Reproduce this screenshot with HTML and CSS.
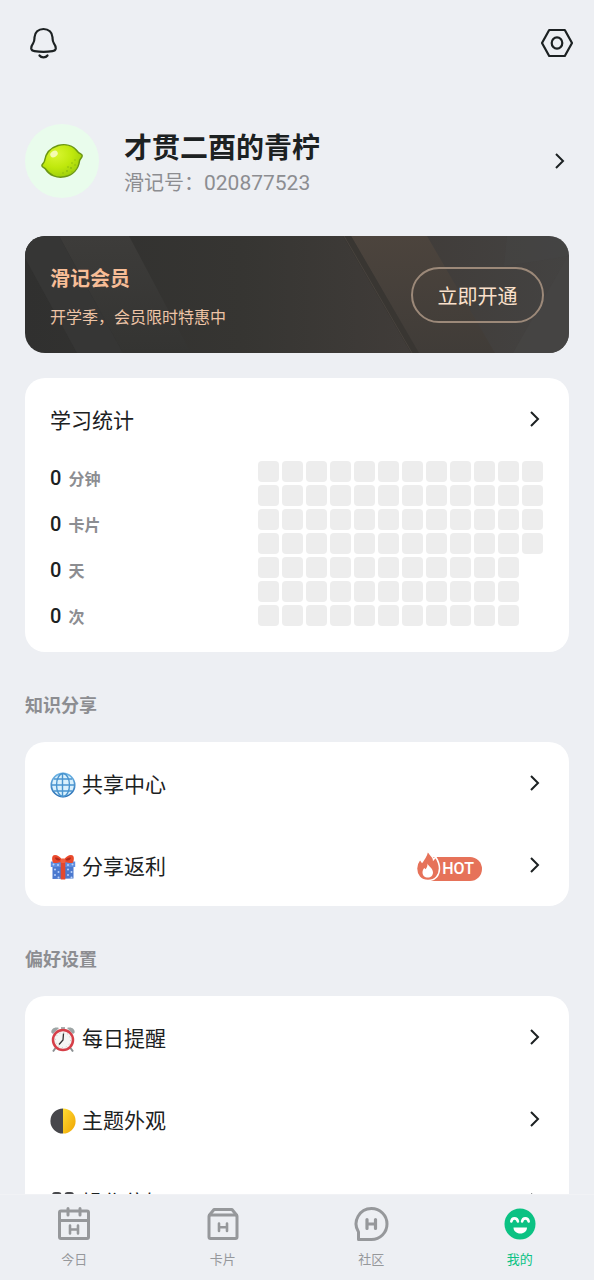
FILE: index.html
```html
<!DOCTYPE html>
<html lang="zh-CN">
<head>
<meta charset="utf-8">
<meta name="viewport" content="width=device-width, initial-scale=1">
<title>我的</title>
<link rel="stylesheet" href="styles.css">
</head>
<body>
<svg class="defs" aria-hidden="true">
  <symbol id="chevron" viewBox="0 0 12 18"><path d="M2 2l7 7-7 7" fill="none" stroke="currentColor" stroke-width="2"/></symbol>
</svg>
<div class="app">
  <main class="content">
    <header class="topbar">
      <button class="icon-btn" type="button" aria-label="通知">
        <svg width="36" height="36" viewBox="0 0 36 36" fill="none" stroke="#1c2122" stroke-width="2.200" stroke-linecap="round" stroke-linejoin="round"><path d="M18.500 4c-5.200 0-8.800 3.400-9 8.300-.1 2.600.1 4-1.400 6-1.500 2.100-2.200 3.500-1.900 5.200.3 1.500 1.500 2.400 3.300 2.700 5.500.8 12.500.8 18 0 1.800-.3 3-1.200 3.300-2.700.3-1.700-.4-3.100-1.900-5.200-1.500-2-1.300-3.400-1.400-6C27.300 7.400 23.700 4 18.500 4z"/><path d="M14.500 30.500c1.800 2.600 6.200 2.600 8 0"/></svg>
      </button>
      <button class="icon-btn" type="button" aria-label="设置">
        <svg width="36" height="36" viewBox="0 0 36 36" fill="none" stroke="#1c2122" stroke-width="2.200" stroke-linejoin="round"><path d="M10.200 5h15.600L33 18l-7.200 13H10.200L3 18z"/><ellipse cx="18" cy="18" rx="5.300" ry="5.600"/></svg>
      </button>
    </header>

    <a class="profile" href="#profile">
      <span class="avatar">
        <svg width="44" height="40" viewBox="0 0 44 40">
          <defs><radialGradient id="lime" cx=".35" cy=".3" r=".75"><stop offset="0" stop-color="#d9f631"/><stop offset=".55" stop-color="#bfe80c"/><stop offset="1" stop-color="#9bcd0c"/></radialGradient></defs>
          <path d="M38 11C33 4 25 2.500 18 4.500 10 7 5.500 13 4.500 20c-.3 2-2.500 3-2.600 4.500-.1 1.800 2.600 2 3.600 3.500 4 6.500 11.500 9.300 19 7.800C33 34 38.500 28 39.500 20c.2-2 2.700-3 2.700-5.200C42.200 12.600 39.500 13 38 11z" fill="url(#lime)" stroke="#6c9713" stroke-width="1.500"/>
          <ellipse cx="14" cy="13" rx="4" ry="3" fill="#f5fbb3" transform="rotate(-35 14 13)"/>
          <g fill="#8dbb12"><circle cx="27" cy="30" r=".9"/><circle cx="31" cy="27" r=".9"/><circle cx="32" cy="22" r=".8"/><circle cx="28" cy="26" r=".8"/><circle cx="35" cy="24" r=".8"/><circle cx="23" cy="32" r=".8"/><circle cx="32" cy="31" r=".7"/><circle cx="35" cy="19" r=".7"/></g>
        </svg>
      </span>
      <span class="profile-text">
        <strong class="name">才贯二酉的青柠</strong>
        <span class="uid">滑记号：<span class="uid-number">020877523</span></span>
      </span>
      <svg class="chevron"><use href="#chevron"/></svg>
    </a>

    <section class="vip">
      <svg class="vip-bg" viewBox="0 0 544 117" preserveAspectRatio="none" aria-hidden="true">
        <defs>
          <linearGradient id="vb"><stop offset="0" stop-color="#30302f"/><stop offset=".4" stop-color="#363532"/><stop offset=".7" stop-color="#403c39"/><stop offset="1" stop-color="#444342"/></linearGradient>
          <linearGradient id="vw" x2="0" y2="1"><stop offset="0" stop-color="#4c443d"/><stop offset="1" stop-color="#403c38"/></linearGradient>
          <linearGradient id="vl" x2="0" y2="1"><stop offset="0" stop-color="#3d3c3a"/><stop offset="1" stop-color="#343432"/></linearGradient>
        </defs>
        <path fill="url(#vb)" d="M0 0h544v117H0z"/>
        <path fill="url(#vl)" d="M34 0h70l62 117H98z"/>
        <path fill="#363635" d="M0 0h34l64 117H52L0 22z"/>
        <path fill="url(#vw)" d="M326 0h76l68 117h-76z"/>
        <path fill="#393632" d="M318 0h8l68 117h-8z"/>
        <path d="M319 0l68 117" stroke="#48433e"/>
        <path fill="#464544" d="M488 117L544 18v99z" opacity=".8"/>
        <path fill="#454545" d="M482 0h62v20l-65 10z" opacity=".4"/>
      </svg>
      <div class="vip-text">
        <h2 class="vip-title">滑记会员</h2>
        <p class="vip-sub">开学季，会员限时特惠中</p>
      </div>
      <button class="vip-btn" type="button">立即开通</button>
    </section>

    <section class="card stats">
      <a class="stats-head" href="#stats"><span class="label">学习统计</span><svg class="chevron"><use href="#chevron"/></svg></a>
      <div class="stats-body">
        <ul class="stat-list">
          <li><b>0</b><span>分钟</span></li>
          <li><b>0</b><span>卡片</span></li>
          <li><b>0</b><span>天</span></li>
          <li><b>0</b><span>次</span></li>
        </ul>
        <div class="heatmap" aria-hidden="true">
          <i></i><i></i><i></i><i></i><i></i><i></i><i></i>
          <i></i><i></i><i></i><i></i><i></i><i></i><i></i>
          <i></i><i></i><i></i><i></i><i></i><i></i><i></i>
          <i></i><i></i><i></i><i></i><i></i><i></i><i></i>
          <i></i><i></i><i></i><i></i><i></i><i></i><i></i>
          <i></i><i></i><i></i><i></i><i></i><i></i><i></i>
          <i></i><i></i><i></i><i></i><i></i><i></i><i></i>
          <i></i><i></i><i></i><i></i><i></i><i></i><i></i>
          <i></i><i></i><i></i><i></i><i></i><i></i><i></i>
          <i></i><i></i><i></i><i></i><i></i><i></i><i></i>
          <i></i><i></i><i></i><i></i><i></i><i></i><i></i>
          <i></i><i></i><i></i><i></i>
        </div>
      </div>
    </section>

    <h3 class="section-title">知识分享</h3>
    <nav class="card">
      <a class="row" href="#share">
        <span class="label">
          <svg width="26" height="26" viewBox="0 0 26 26" fill="none">
            <defs><linearGradient id="gl" x2="0" y2="1"><stop offset="0" stop-color="#6fb6e6"/><stop offset="1" stop-color="#2a6fb4"/></linearGradient></defs>
            <circle cx="13" cy="13" r="11.700" fill="#d9f0fc" stroke="url(#gl)" stroke-width="1.700"/>
            <path d="M12.500 1.500v23M1.500 13h23.001M4 7h18M4 19h18" stroke="#4994cf" stroke-width="1.400"/><ellipse cx="13" cy="13" rx="6.500" ry="11.500" stroke="#4994cf" stroke-width="1.400"/>
          </svg>共享中心</span>
        <svg class="chevron"><use href="#chevron"/></svg>
      </a>
      <a class="row" href="#rebate">
        <span class="label">
          <svg width="26" height="26" viewBox="0 0 26 26">
            <path fill="#4b79cf" d="M2.500 12h21v12.500l-21 .5z"/><path fill="#5f8ee0" d="M.8 7.500h24.400v5.500H.8z"/>
            <g fill="#b9d2fb"><circle cx="5" cy="15.500" r="1"/><circle cx="8.500" cy="18" r="1"/><circle cx="5" cy="21" r="1"/><circle cx="8.500" cy="23.500" r="1"/><circle cx="18" cy="15.500" r="1"/><circle cx="21.500" cy="18" r="1"/><circle cx="18" cy="21" r="1"/><circle cx="21.500" cy="23.500" r="1"/><circle cx="3.500" cy="10.500" r="1"/><circle cx="22.500" cy="10.500" r="1"/><circle cx="8" cy="11" r="1"/><circle cx="18" cy="11" r="1"/></g>
            <path fill="#e2492f" d="M10.700 7h4.600v18.500h-4.600z"/>
            <path fill="#ea4a2c" d="M13 7C10 1.500 5 0 3.200 1.500 1.500 3 2 7.500 3.500 9c2.500.4 6.500-.3 9.500-2zM13 7c3-5.500 8-7 9.800-5.500C24.500 3 24 7.500 22.500 9 20 9.400 16 8.700 13 7z"/>
            <path fill="#b42a1c" d="M11 6C9 4 6.500 3 5 3.800 5 6 8 7 11 6zM15 6c2-2 4.500-3 6-2.200C21 6 18 7 15 6z"/><rect x="10.500" y="4.500" width="5" height="4.500" rx="1.500" fill="#f2603f"/>
          </svg>分享返利</span>
        <span class="hot">
          <svg class="flame" width="25" height="32" viewBox="0 0 25 32"><path d="M11.500 1c.5 3.500 5.500 5.500 6 9.500l2.200-2.500c2.200 3.500 3.800 7.500 3.800 11.500 0 6.500-4 12-11.500 12S.5 26 .5 19.500C.5 15 2.500 12 4 10l2 3C8 10 11.500 6 11.500 1z" fill="#e67259" stroke="#fff" stroke-width="1.500"/><path d="M11.500 14.500c.4 2.500 5.500 4.500 5.500 9 0 3-2.200 5-5.200 5s-5.300-2-5.300-5c0-2.200 1-3.500 1.800-4.500l1.200 1.200c1.500-1.500 2-3.200 2-5.700z" fill="#fff"/></svg>
          <span class="hot-text">HOT</span>
        </span>
        <svg class="chevron"><use href="#chevron"/></svg>
      </a>
    </nav>

    <h3 class="section-title">偏好设置</h3>
    <nav class="card">
      <a class="row" href="#remind">
        <span class="label">
          <svg width="26" height="26" viewBox="0 0 26 26">
            <path d="M5.500 22l-2.500 3.500M20.500 22l2.500 3.500" stroke="#8b9092" stroke-width="2"/>
            <path d="M1.300 6.500C1 3 4.500.5 9 2L3 8zM24.700 6.500C25 3 21.500.5 17 2l6 6z" fill="#9da5a5"/><path d="M11 1h4v3h-4z" fill="#a9aeae"/>
            <circle cx="13" cy="14" r="10" fill="#f5f6f4" stroke="#d63f48" stroke-width="2.500"/>
            <circle cx="13" cy="14" r="7.500" fill="none" stroke="#c4c5c3" stroke-dasharray="1 2.930"/>
            <path d="M13.500 7.500L13 14l-4 4.500" fill="none" stroke="#333" stroke-width="1.300"/>
          </svg>每日提醒</span>
        <svg class="chevron"><use href="#chevron"/></svg>
      </a>
      <a class="row" href="#theme">
        <span class="label">
          <svg width="26" height="26" viewBox="0 0 26 26">
            <defs><linearGradient id="mn" x2="1" y2="1"><stop offset="0" stop-color="#ffdc35"/><stop offset="1" stop-color="#efa300"/></linearGradient></defs>
            <path d="M13 .4a12.600 12.600 0 0 1 0 25.200z" fill="url(#mn)"/><path d="M13 .4a12.600 12.600 0 0 0 0 25.200z" fill="#47474b"/>
          </svg>主题外观</span>
        <svg class="chevron"><use href="#chevron"/></svg>
      </a>
      <a class="row" href="#operation">
        <span class="label">
          <svg width="26" height="26" viewBox="0 0 26 26" fill="#48494d"><rect x="2" y="2" width="9.500" height="13" rx="3"/><rect x="14.500" y="2" width="9.500" height="13" rx="3"/><path d="M10 7h6v8h-6z"/><circle cx="6.500" cy="18.500" r="6"/><circle cx="19.500" cy="18.500" r="6"/></svg>操作偏好</span>
        <svg class="chevron"><use href="#chevron"/></svg>
      </a>
    </nav>
  </main>

  <nav class="tabbar">
    <a class="tab" href="#today">
      <svg width="36" height="36" viewBox="0 0 36 36" fill="none" stroke="currentColor" stroke-width="3" stroke-linecap="round" stroke-linejoin="round"><rect x="3.500" y="5" width="29" height="27.500" rx="1.500"/><path d="M4 14.500h28M12 2.500v6.500M24 2.500v6.500"/><path d="M14 19.500v8M22 19.500v8M14 23.500h8" stroke-width="2.600"/></svg>
      今日</a>
    <a class="tab" href="#cards">
      <svg width="36" height="36" viewBox="0 0 36 36" fill="none" stroke="currentColor" stroke-width="3" stroke-linecap="round" stroke-linejoin="round"><rect x="4" y="9" width="28" height="23.500" rx="1.500"/><path d="M4.500 9L9 3.500h18L31.500 9"/><path d="M14 17.500v7.500M22 17.500v7.500M14 21.300h8" stroke-width="2.600"/></svg>
      卡片</a>
    <a class="tab" href="#community">
      <svg width="36" height="36" viewBox="0 0 36 36" fill="none" stroke="currentColor" stroke-width="3" stroke-linecap="round" stroke-linejoin="round"><path d="M18.500 2.500a15.300 15.300 0 0 1 0 31H5.500v-7.500A15.300 15.300 0 0 1 18.500 2.500z"/><path d="M14 13.500v9M22.500 13.500v9M14 18h8.500" stroke-width="3.200"/></svg>
      社区</a>
    <a class="tab active" href="#me" aria-current="page">
      <svg width="36" height="36" viewBox="0 0 36 36"><circle cx="18" cy="18" r="15.500" fill="currentColor"/><g fill="none" stroke="#fff" stroke-width="2.600" stroke-linecap="round"><path d="M9.300 15.500c.7-4.200 5.700-4.200 6.600 0M20.100 15.500c.7-4.200 5.700-4.200 6.600 0"/></g><path d="M11.500 21.500H25c0 3.500-2.800 6-6.700 6s-6.800-2.500-6.800-6z" fill="#fff"/></svg>
      我的</a>
  </nav>
</div>
</body>
</html>
```
FILE: styles.css
```css
* { box-sizing: border-box; }

body {
  margin: 0;
  background: #edeff3;
  color: #1c2122;
  font-family: Roboto, "Noto Sans CJK SC", sans-serif;
}

a { color: inherit; text-decoration: none; }
h2, h3, p, ul { margin: 0; padding: 0; }
button { font: inherit; background: none; border: 0; padding: 0; cursor: pointer; }
svg { flex: none; }

.defs { position: absolute; width: 0; height: 0; }

.app { display: flex; flex-direction: column; height: 100vh; }

.content {
  flex: 1;
  min-height: 0;
  overflow-y: auto;
  scrollbar-width: none;
  padding: 0 25px 25px;
}

.topbar {
  display: flex;
  justify-content: space-between;
  align-items: center;
  padding-top: 25px;
  margin-right: -6px;
}
.icon-btn { display: flex; }

.chevron { width: 12px; height: 18px; }

.profile {
  display: flex;
  align-items: center;
  margin-top: 62px;
  padding-right: 3px;
}
.avatar {
  display: flex;
  align-items: center;
  justify-content: center;
  width: 74px;
  height: 74px;
  border-radius: 50%;
  background: #e9fcec;
}
.profile-text {
  display: flex;
  flex: 1;
  flex-direction: column;
  margin-left: 25px;
  padding-top: 8px;
}
.name { font-size: 28px; line-height: 36px; }
.uid { font-size: 20px; line-height: 32px; color: #8c8d91; }
.uid-number { font-size: 21px; }

.vip {
  position: relative;
  display: flex;
  align-items: center;
  justify-content: space-between;
  min-height: 117px;
  margin-top: 37px;
  padding: 0 25px;
  border-radius: 20px;
  overflow: hidden;
}
.vip-bg { position: absolute; inset: 0; width: 100%; height: 100%; }
.vip-text, .vip-btn { position: relative; }
.vip-text { padding-top: 4px; }
.vip-title { font-size: 20px; line-height: 30px; color: #f7bd97; }
.vip-sub { margin-top: 12px; font-size: 16px; line-height: 24px; color: #eec4a6; }
.vip-btn {
  width: 133px;
  height: 56px;
  padding-top: 2px;
  border: 2px solid #9c8979;
  border-radius: 28px;
  font-size: 20px;
  color: #fae0cb;
}

.card { background: #fff; border-radius: 20px; }

.label {
  display: flex;
  align-items: center;
  gap: 6px;
  padding-top: 4px;
  font-size: 21px;
  line-height: 32px;
}

.stats { margin-top: 25px; padding: 23px 26px 20px 25px; }
.stats-head {
  display: flex;
  align-items: center;
  justify-content: space-between;
  padding-right: 2px;
}
.stats-body {
  display: flex;
  justify-content: space-between;
  align-items: flex-start;
  margin-top: 24px;
}
.stat-list { display: grid; gap: 14px; padding-top: 1px; list-style: none; }
.stat-list li { display: flex; align-items: baseline; gap: 7px; height: 32px; line-height: 32px; }
.stat-list b { font-size: 20px; font-weight: 500; }
.stat-list span { font-size: 16px; font-weight: 700; color: #8c8d91; }

.heatmap {
  display: grid;
  grid-auto-flow: column;
  grid-template-rows: repeat(7, 21px);
  grid-auto-columns: 21px;
  gap: 3px;
}
.heatmap i { border-radius: 4px; background: #ededed; }

.section-title {
  padding: 40px 0 22px;
  font-size: 18px;
  line-height: 28px;
  color: #8c8d91;
}

.row {
  display: flex;
  align-items: center;
  height: 82px;
  padding: 0 28px 0 25px;
}
.row .label { flex: 1; }

.hot { display: flex; align-items: flex-end; margin-right: 47px; }
.flame { position: relative; }
.hot-text {
  margin-left: -11px;
  padding: 0 8px 0 12px;
  border-radius: 0 12px 12px 0;
  background: #e67259;
  color: #fff;
  font-size: 16px;
  font-weight: 500;
  line-height: 24px;
}

.tabbar {
  display: grid;
  grid-template-columns: repeat(4, 1fr);
  height: 86px;
  border-top: 1px solid #f1f2f5;
  background: #edeff3;
}
.tab {
  display: flex;
  flex-direction: column;
  align-items: center;
  gap: 8px;
  padding-top: 11px;
  font-size: 13px;
  line-height: 20px;
  color: #96989b;
}
.tab.active { color: #0bc283; }
```
